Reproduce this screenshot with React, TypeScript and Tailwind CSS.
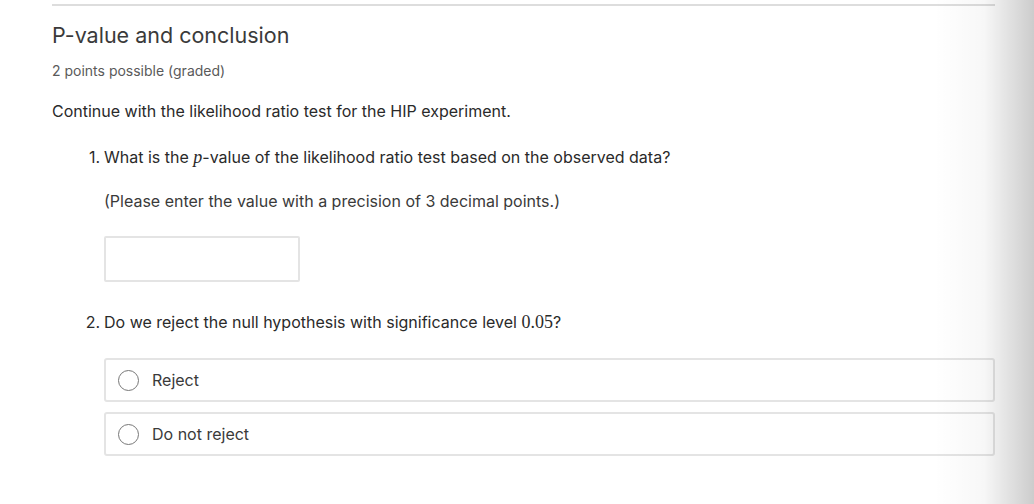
import React, { useState } from 'react';

const options = ['Reject', 'Do not reject'];

const App: React.FC = () => {
    const [answer, setAnswer] = useState('');
    const [choice, setChoice] = useState<string | null>(null);

    return (
        <div className="relative min-h-[504px] bg-white overflow-hidden" style={{ fontFamily: 'Inter, "Noto Sans", sans-serif' }}>
            <div className="ml-[52px] w-[943px] pt-[4px]">
                <div className="h-[2px] bg-[#dddddd]" />
                <h2 className="mt-[16px] text-[21.5px] leading-[26px] text-[#3a3a3a]">P-value and conclusion</h2>
                <p className="mt-[14px] text-[14px] leading-[18px] text-[#5a5a5a]">2 points possible (graded)</p>
                <p className="mt-[21px] text-[16px] leading-[20px] text-[#2a2a2a]">
                    Continue with the likelihood ratio test for the HIP experiment.
                </p>

                <ol className="mt-[26px] text-[16px] leading-[20px] text-[#2a2a2a]">
                    <li className="flex">
                        <span className="w-[52px] text-right pr-[4px]">1.</span>
                        <div className="flex-1">
                            <p>
                                What is the{' '}
                                <span className="italic text-[18px]" style={{ fontFamily: '"Liberation Serif", serif' }}>p</span>
                                -value of the likelihood ratio test based on the observed data?
                            </p>
                            <p className="mt-[24px] text-[#3a3a3a]">(Please enter the value with a precision of 3 decimal points.)</p>
                            <input
                                type="text"
                                value={answer}
                                onChange={(e) => setAnswer(e.target.value)}
                                className="mt-[25px] block w-[196px] h-[46px] px-3 border-2 border-[#e4e4e4] rounded-[2px] outline-none"
                            />
                        </div>
                    </li>
                    <li className="flex mt-[30px]">
                        <span className="w-[52px] text-right pr-[4px]">2.</span>
                        <div className="flex-1">
                            <p>
                                Do we reject the null hypothesis with significance level{' '}
                                <span className="text-[18px]" style={{ fontFamily: '"Liberation Serif", serif' }}>0.05</span>?
                            </p>
                            <div className="mt-[26px] flex flex-col gap-[10px]">
                                {options.map((opt) => (
                                    <label
                                        key={opt}
                                        className="flex items-center h-[44px] border-2 border-[#e4e4e4] rounded-[3px] pl-[12px] cursor-pointer"
                                    >
                                        <span
                                            className="w-[21px] h-[21px] rounded-full border border-[#777777] flex items-center justify-center"
                                            onClick={() => setChoice(opt)}
                                        >
                                            {choice === opt && <span className="w-[11px] h-[11px] rounded-full bg-[#333333]" />}
                                        </span>
                                        <span className="ml-[13px] text-[16px] text-[#3a3a3a]">{opt}</span>
                                    </label>
                                ))}
                            </div>
                        </div>
                    </li>
                </ol>
            </div>
            <div className="pointer-events-none absolute top-0 right-0 h-full w-[100px] bg-gradient-to-r from-transparent via-[rgba(0,0,0,0.03)] to-[rgba(0,0,0,0.2)]" />
        </div>
    );
};

export default App;
